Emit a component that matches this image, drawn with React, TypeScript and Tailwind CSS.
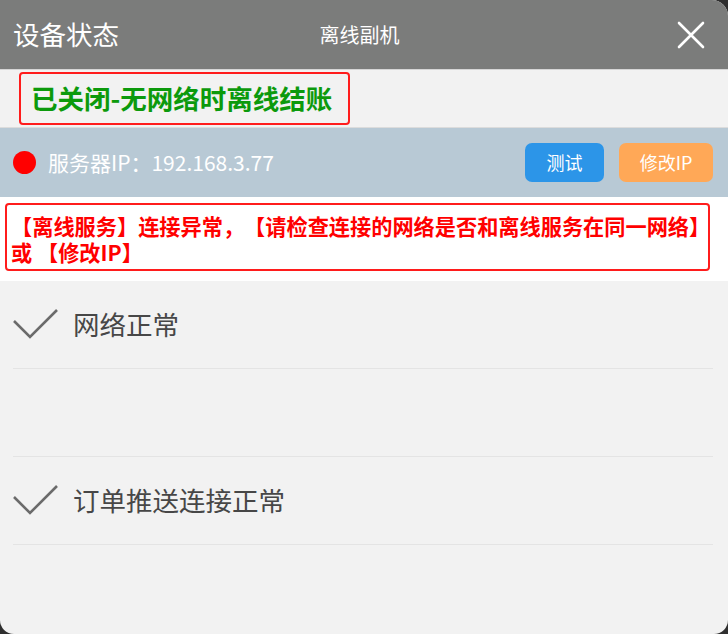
import React from 'react';

const font = { fontFamily: '"Noto Sans CJK SC", "Noto Sans", sans-serif' };

const Check: React.FC = () => (
  <svg width="46" height="32" viewBox="0 0 46 32" className="shrink-0">
    <polyline points="1,12 17,28 44,1" fill="none" stroke="#6b6b6b" strokeWidth="2.6" />
  </svg>
);

export default function App() {
  const items = ['网络正常', '', '订单推送连接正常'];

  return (
    <div className="w-[728px] h-[634px] bg-[#2f2f2f] [text-spacing-trim:space-all]" style={font}>
      <div className="h-full flex flex-col bg-[#f2f2f2] rounded-tr-[16px] rounded-b-[14px] overflow-hidden">
        {/* header */}
        <div className="h-[70px] shrink-0 bg-[#7b7c7b] border-b border-[#d6d6d6] grid grid-cols-[1fr_auto_1fr] items-center pl-[13px] pr-[22px] text-white">
          <span className="text-[26.5px] leading-none">设备状态</span>
          <span className="text-[20px] leading-none">离线副机</span>
          <div className="flex justify-end">
            <svg width="30" height="30" viewBox="0 0 30 30">
              <path d="M3 3 L27 27 M27 3 L3 27" stroke="#fff" strokeWidth="2.6" strokeLinecap="round" />
            </svg>
          </div>
        </div>

        {/* offline checkout state */}
        <div className="h-[58px] shrink-0 bg-[#f2f2f2] border-b border-[#dcdcdc] flex items-center pl-[19px]">
          <div className="w-[331px] h-[53px] border-2 border-[#ff1c1c] rounded-[4px] flex items-center pl-[10px]">
            <span className="text-[26.5px] font-bold text-[#0c9a0c] leading-none">已关闭-无网络时离线结账</span>
          </div>
        </div>

        {/* server ip */}
        <div className="h-[69px] shrink-0 bg-[#b8c9d5] flex items-center pl-[13px] pr-[15px]">
          <span className="w-[23px] h-[23px] rounded-full bg-[#ff0000]" />
          <span className="ml-[12px] text-[21px] text-white">服务器IP：192.168.3.77</span>
          <div className="ml-auto flex gap-[15px]">
            <button className="w-[79px] h-[39px] rounded-[7px] bg-[#2c95e8] text-white text-[18px]">测试</button>
            <button className="w-[94px] h-[39px] rounded-[7px] bg-[#ffa857] text-white text-[18px]">修改IP</button>
          </div>
        </div>

        {/* warning */}
        <div className="h-[84px] shrink-0 bg-white pt-[6px] pl-[5px]">
          <div className="w-[705px] h-[68px] border-2 border-[#ff1c1c] rounded-[4px] pl-[4px] pt-[8px] text-[#ff0000] font-bold text-[21.2px] leading-[26px] whitespace-nowrap overflow-hidden">
            【离线服务】连接异常，【请检查连接的网络是否和离线服务在同一网络】
            <br />或 【修改IP】
          </div>
        </div>

        {/* status list */}
        <div className="flex flex-col px-[13px] pr-[15px]">
          {items.map((label, idx) => (
            <div key={idx} className="h-[88px] border-b border-[#e4e4e4] flex items-center">
              {label && (
                <>
                  <Check />
                  <span className="ml-[14px] text-[26.5px] text-[#474747] leading-none">{label}</span>
                </>
              )}
            </div>
          ))}
        </div>
      </div>
    </div>
  );
}
